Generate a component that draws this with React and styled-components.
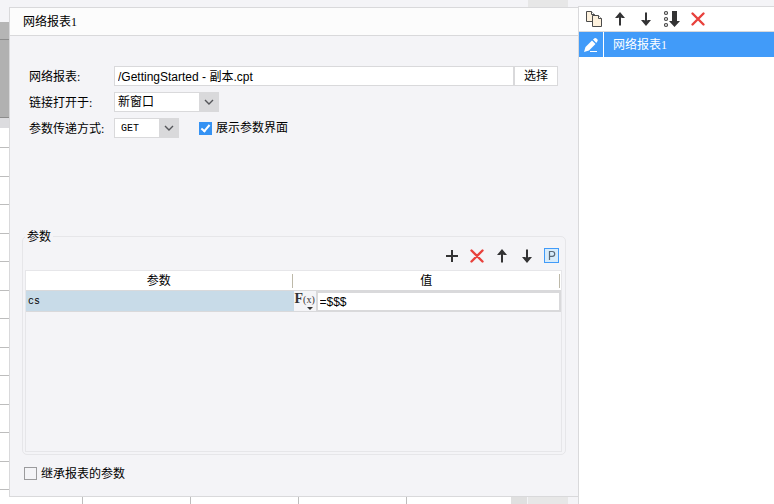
import styled, { createGlobalStyle } from 'styled-components';
import { useState } from 'react';

const panelColor = '#f4f4f7';
const lineColor = '#d9d9db';
const softLineColor = '#e6e6e9';
const accentColor = '#419bf9';
const iconColor = '#333334';
const dangerColor = '#e8413c';
const songFont = "'Liberation Serif', 'Noto Sans CJK SC', serif";
const sansFont = "'Liberation Sans', 'Noto Sans CJK SC', sans-serif";
const monoFont = "'Liberation Mono', 'Noto Sans CJK SC', monospace";

const gutterRows = Array.from({ length: 12 }, (_, index) => index);

const PlusIcon = () => (
  <svg width="16" height="16" viewBox="0 0 16 16" aria-hidden="true">
    <path d="M8 2v12M2 8h12" stroke={iconColor} strokeWidth="2" />
  </svg>
);

const CrossIcon = () => (
  <svg width="16" height="16" viewBox="0 0 16 16" aria-hidden="true">
    <path
      d="M2.500 2.500l11 11M13.500 2.500l-11 11"
      stroke={dangerColor}
      strokeWidth="2.400"
      strokeLinecap="round"
    />
  </svg>
);

const UpIcon = () => (
  <svg width="16" height="16" viewBox="0 0 16 16" aria-hidden="true">
    <path d="M8 5v9.500" stroke={iconColor} strokeWidth="2" />
    <path d="M8 1l5 6h-3l-2-1-2 1H3z" fill={iconColor} />
  </svg>
);

const DownIcon = () => (
  <svg width="16" height="16" viewBox="0 0 16 16" aria-hidden="true">
    <path d="M8 1.500V11" stroke={iconColor} strokeWidth="2" />
    <path d="M8 15l5-6h-3l-2 1-2-1H3z" fill={iconColor} />
  </svg>
);

const CopyIcon = () => (
  <svg width="18" height="18" viewBox="0 0 18 18" aria-hidden="true">
    <g fill="#fdf1dd" stroke="#4b4b4b">
      <path d="M1.500 1.500h5l3 3v7h-8z" />
      <path d="M6.500 1.500v3h3" fill="#fff" />
      <path d="M7.500 5.500h6l3 3v8h-9z" />
      <path d="M13.500 5.500v3h3" fill="#fff" />
    </g>
  </svg>
);

const SortIcon = () => (
  <svg width="18" height="18" viewBox="0 0 18 18" aria-hidden="true">
    <g fill="none" stroke="#444" strokeWidth="1.200">
      <circle cx="3" cy="3" r="1.500" />
      <circle cx="3" cy="9" r="1.500" />
      <circle cx="3" cy="15" r="1.500" />
    </g>
    <path d="M9 1h5v10h3l-5.500 6-5.500-6h3z" fill={iconColor} />
  </svg>
);

const PencilIcon = () => (
  <svg width="16" height="16" viewBox="0 0 16 16" aria-hidden="true">
    <path d="M1 15l1.500-5L9 3.500l3.500 3.500L6 13.500z" fill="#fff" />
    <path d="M10 2.500l1.500-1.300q1-.7 2 .3l.8.8q.9 1 .1 1.900L13.300 6z" fill="#fff" />
    <path d="M7 14.500h7" stroke="#fff" />
  </svg>
);

const ParamIcon = () => (
  <svg width="15" height="15" viewBox="0 0 15 15" aria-hidden="true">
    <rect x=".5" y=".5" width="14" height="14" fill="#d7ebfa" stroke={accentColor} />
    <path d="M5.500 12V3.500h2.800a2.300 2.300 0 0 1 0 4.800H5.500" fill="none" stroke="#596977" strokeWidth="1.200" />
  </svg>
);

const ChevronIcon = () => (
  <svg width="10" height="8" viewBox="0 0 10 8" aria-hidden="true">
    <path d="M1 2l4 4 4-4" fill="none" stroke="#55565a" strokeWidth="1.400" />
  </svg>
);

const App = () => {
  const [path, setPath] = useState('/GettingStarted - 副本.cpt');
  const [paramValue, setParamValue] = useState('=$$$');

  return (
    <Page>
      <GlobalStyle />
      <Gutter>
        <GutterTop />
        <GutterRuler />
        <GutterBlock />
        <GutterEdge />
        <GutterFirstRow />
        {gutterRows.map((row) => (
          <GutterRow key={row} />
        ))}
        <GutterRest />
      </Gutter>
      <TopStrip>
        <StripBlock />
      </TopStrip>
      <Dialog>
        <DialogTitle>网络报表1</DialogTitle>
        <DialogBody>
          <Form>
            <FormRow>
              <Label htmlFor="report">网络报表:</Label>
              <PathInput
                id="report"
                value={path}
                onChange={(e) => setPath(e.target.value)}
              />
              <ChooseButton type="button">选择</ChooseButton>
            </FormRow>
            <FormRow>
              <Label htmlFor="target">链接打开于:</Label>
              <SelectBox width={105}>
                <Select id="target" defaultValue="window">
                  <option value="window">新窗口</option>
                  <option value="dialog">对话框</option>
                </Select>
                <SelectArrow>
                  <ChevronIcon />
                </SelectArrow>
              </SelectBox>
            </FormRow>
            <FormRow>
              <Label htmlFor="method">参数传递方式:</Label>
              <SelectBox width={65}>
                <Select id="method" defaultValue="GET" mono>
                  <option value="GET">GET</option>
                  <option value="POST">POST</option>
                </Select>
                <SelectArrow>
                  <ChevronIcon />
                </SelectArrow>
              </SelectBox>
              <InlineCheck>
                <CheckBox type="checkbox" defaultChecked />
                展示参数界面
              </InlineCheck>
            </FormRow>
          </Form>
          <ParamGroup>
            <Legend>参数</Legend>
            <ParamTools>
              <IconButton type="button" aria-label="添加"><PlusIcon /></IconButton>
              <IconButton type="button" aria-label="删除"><CrossIcon /></IconButton>
              <IconButton type="button" aria-label="上移"><UpIcon /></IconButton>
              <IconButton type="button" aria-label="下移"><DownIcon /></IconButton>
              <IconButton type="button" aria-label="参数"><ParamIcon /></IconButton>
            </ParamTools>
            <TableFrame>
              <Table>
                <thead>
                  <tr>
                    <HeadCell><HeadText>参数</HeadText></HeadCell>
                    <HeadCell><HeadText>值</HeadText></HeadCell>
                  </tr>
                </thead>
                <tbody>
                  <tr>
                    <NameCell>cs</NameCell>
                    <ValueCell>
                      <ValueEditor>
                        <FormulaButton type="button" aria-label="公式">
                          <FormulaLetter>F</FormulaLetter>(x)
                          <FormulaCaret />
                        </FormulaButton>
                        <ValueInput
                          aria-label="值"
                          value={paramValue}
                          onChange={(e) => setParamValue(e.target.value)}
                        />
                      </ValueEditor>
                    </ValueCell>
                  </tr>
                </tbody>
              </Table>
            </TableFrame>
          </ParamGroup>
          <FooterCheck>
            <CheckBox type="checkbox" />
            <CheckText>继承报表的参数</CheckText>
          </FooterCheck>
        </DialogBody>
      </Dialog>
      <BottomStrip>
        <SheetCell width={74} />
        <SheetCell width={108} />
        <SheetCell width={108} />
        <SheetCell width={108} />
        <SheetRest />
        <ScrollCorner />
        <StripBlock />
      </BottomStrip>
      <Side>
        <SideTools>
          <SideButton type="button" aria-label="复制"><CopyIcon /></SideButton>
          <SideButton type="button" aria-label="上移"><UpIcon /></SideButton>
          <SideButton type="button" aria-label="下移"><DownIcon /></SideButton>
          <SideButton type="button" aria-label="排序"><SortIcon /></SideButton>
          <SideButton type="button" aria-label="删除"><CrossIcon /></SideButton>
        </SideTools>
        <SideItem type="button">
          <SideItemIcon>
            <PencilIcon />
          </SideItemIcon>
          <SideItemText>网络报表1</SideItemText>
        </SideItem>
      </Side>
    </Page>
  );
};

const GlobalStyle = createGlobalStyle`
  *, *::after {
    box-sizing: border-box;
  }
  body {
    margin: 0;
    background: #fff;
    color: #000;
    font: 12px/16px ${songFont};
  }
  button, input, select {
    margin: 0;
    padding: 0;
    border-radius: 0;
    color: inherit;
    font: inherit;
  }
`;

const Page = styled.div`
  display: grid;
  grid-template-columns: 9px minmax(0, 1fr) 196px;
  grid-template-rows: 7px minmax(0, 1fr) 7px;
  min-height: 100vh;
  background: ${panelColor};
`;

/* spreadsheet visible around the dialog */
const Gutter = styled.div`
  grid-column: 1;
  grid-row: 1 / 4;
  display: flex;
  flex-direction: column;
  background: #fff;
`;

const GutterTop = styled.div`
  height: 22px;
  background: ${panelColor};
`;

const GutterRuler = styled.div`
  height: 18px;
  background: #b5b5b5;
  border-bottom: 1px solid #8c8c8c;
`;

const GutterBlock = styled.div`
  height: 78px;
  background: #b1b1b1;
  border-bottom: 1px solid #8c8c8c;
`;

const GutterEdge = styled.div`
  height: 10px;
  background: #dcdcdf;
`;

const GutterFirstRow = styled.div`
  height: 20px;
  border-bottom: 1px solid #bdbdbd;
`;

const GutterRow = styled.div`
  flex: 1;
  border-bottom: 1px solid #bdbdbd;
`;

const GutterRest = styled.div`
  height: 14px;
`;

const TopStrip = styled.div`
  grid-column: 2;
  display: flex;
  justify-content: flex-end;
  padding-right: 10px;
`;

const StripBlock = styled.div`
  width: 40px;
  background: #e7e7e7;
`;

const BottomStrip = styled.div`
  grid-column: 2;
  grid-row: 3;
  display: flex;
  padding-right: 10px;
`;

const SheetCell = styled.div`
  width: ${(props) => props.width}px;
  background: #fff;
  border-right: 1px solid #bdbdbd;
`;

const SheetRest = styled.div`
  flex: 1;
  background: #fff;
`;

const ScrollCorner = styled.div`
  width: 16px;
  margin-right: 1px;
  background: #e0e0e0;
`;

const Dialog = styled.main`
  grid-column: 2;
  grid-row: 2;
  display: flex;
  flex-direction: column;
  border: 1px solid ${lineColor};
  border-right: 0;
  background: ${panelColor};
`;

const DialogTitle = styled.h1`
  margin: 0;
  padding: 6px 13px 5px;
  border-bottom: 1px solid ${lineColor};
  background: #fcfcfc;
  font-size: 12px;
  font-weight: normal;
  line-height: 16px;
`;

const DialogBody = styled.div`
  flex: 1;
  display: flex;
  flex-direction: column;
  padding: 30px 12px 14px;
`;

const Form = styled.div`
  display: flex;
  flex-direction: column;
  gap: 6px;
  margin-bottom: 89px;
  padding: 0 8px 0 7px;
`;

const FormRow = styled.div`
  display: flex;
  align-items: center;
  height: 20px;
`;

const Label = styled.label`
  width: 85px;
  padding-top: 2px;
`;

const PathInput = styled.input`
  flex: 1;
  min-width: 0;
  height: 20px;
  padding: 0 3px 2px;
  border: 1px solid ${lineColor};
  background: #fff;
  font-family: ${sansFont};
`;

const ChooseButton = styled.button`
  width: 44px;
  height: 20px;
  border: 1px solid ${lineColor};
  background: #fff;
`;

const SelectBox = styled.div`
  position: relative;
  width: ${(props) => props.width}px;
  height: 20px;
`;

const Select = styled.select.withConfig({
  shouldForwardProp: (prop) => prop !== 'mono',
})`
  appearance: none;
  width: 100%;
  height: 20px;
  padding: 0 20px 0 ${(props) => (props.mono ? 6 : 3)}px;
  border: 1px solid ${lineColor};
  background: #fff;
  font: ${(props) => (props.mono ? `10px ${monoFont}` : `12px ${songFont}`)};
`;

const SelectArrow = styled.span`
  position: absolute;
  top: 0;
  right: 0;
  display: flex;
  align-items: center;
  justify-content: center;
  width: 20px;
  height: 20px;
  background: ${lineColor};
  pointer-events: none;
`;

const InlineCheck = styled.label`
  display: flex;
  align-items: center;
  gap: 4px;
  margin-left: 20px;
`;

const FooterCheck = styled.label`
  display: flex;
  align-items: center;
  align-self: flex-start;
  gap: 4px;
  margin: 9px 0 0 2px;
`;

const CheckText = styled.span`
  padding-top: 2px;
`;

const CheckBox = styled.input`
  appearance: none;
  display: grid;
  place-items: center;
  width: 13px;
  height: 13px;
  border: 1px solid #9b9b9d;
  background: ${panelColor};

  &:checked {
    border-color: #3592f3;
    background: #3592f3;
  }
  &:checked::after {
    content: '';
    width: 5px;
    height: 9px;
    margin-bottom: 2px;
    border: solid #fff;
    border-width: 0 2px 2px 0;
    transform: rotate(40deg);
  }
`;

const ParamGroup = styled.fieldset`
  flex: 1;
  display: flex;
  flex-direction: column;
  min-width: 0;
  margin: 0;
  padding: 0 3px 2px 2px;
  border: 1px solid ${softLineColor};
  border-radius: 5px;
`;

const Legend = styled.legend`
  padding: 2px 2px 0;
  line-height: 16px;
`;

const ParamTools = styled.div`
  display: flex;
  align-items: flex-start;
  justify-content: flex-end;
  gap: 9px;
  height: 25px;
  padding: 3px 3px 0 0;
`;

const IconButton = styled.button`
  display: flex;
  align-items: center;
  justify-content: center;
  border: 0;
  background: none;
`;

const SideButton = styled(IconButton)`
  width: 18px;
  height: 18px;
`;

const TableFrame = styled.div`
  flex: 1;
  border: 1px solid ${softLineColor};
`;

const Table = styled.table`
  width: 100%;
  table-layout: fixed;
  border-spacing: 0;
`;

const HeadCell = styled.th`
  height: 20px;
  padding: 0;
  border-bottom: 1px solid ${lineColor};
  background: #fff;
  font-weight: normal;
`;

const HeadText = styled.div`
  height: 14px;
  margin-top: 1px;
  margin-right: 1px;
  border-right: 1px solid #bdb9a9;
  line-height: 15px;
`;

const NameCell = styled.td`
  height: 21px;
  padding: 0 2px;
  border-bottom: 1px solid ${lineColor};
  background: #c8dbe8;
  font: 10px ${monoFont};
`;

const ValueCell = styled.td`
  padding: 0;
`;

const ValueEditor = styled.div`
  display: flex;
  height: 21px;
`;

const FormulaButton = styled.button`
  position: relative;
  width: 22px;
  padding: 0 0 4px 1px;
  border: 0;
  border-bottom: 1px solid ${lineColor};
  background: ${panelColor};
  color: ${iconColor};
  font: 10px/14px 'Liberation Serif', serif;
  text-align: left;
  white-space: nowrap;
`;

const FormulaLetter = styled.b`
  font-size: 14px;
`;

const FormulaCaret = styled.i`
  position: absolute;
  right: 3px;
  bottom: 1px;
  border: solid transparent;
  border-width: 3px 3px 0;
  border-top-color: ${iconColor};
`;

const ValueInput = styled.input`
  flex: 1;
  min-width: 0;
  padding: 0 2px;
  border: 2px solid ${lineColor};
  background: #fff;
  font-family: ${sansFont};
`;

const Side = styled.aside`
  grid-column: 3;
  grid-row: 1 / 4;
  margin-top: 6px;
  border-top: 1px solid ${lineColor};
  border-left: 1px solid ${lineColor};
  background: #fff;
`;

const SideTools = styled.div`
  display: flex;
  align-items: center;
  gap: 8px;
  height: 25px;
  padding: 0 6px;
  border-bottom: 1px solid ${lineColor};
`;

const SideItem = styled.button`
  display: flex;
  width: 100%;
  height: 25px;
  border: 0;
  background: ${accentColor};
  color: #fff;
  text-align: left;
`;

const SideItemIcon = styled.span`
  display: flex;
  align-items: center;
  justify-content: center;
  width: 25px;
  height: 25px;
  border-right: 1px solid #fff;
`;

const SideItemText = styled.span`
  padding-left: 9px;
  line-height: 26px;
`;

export default App;
